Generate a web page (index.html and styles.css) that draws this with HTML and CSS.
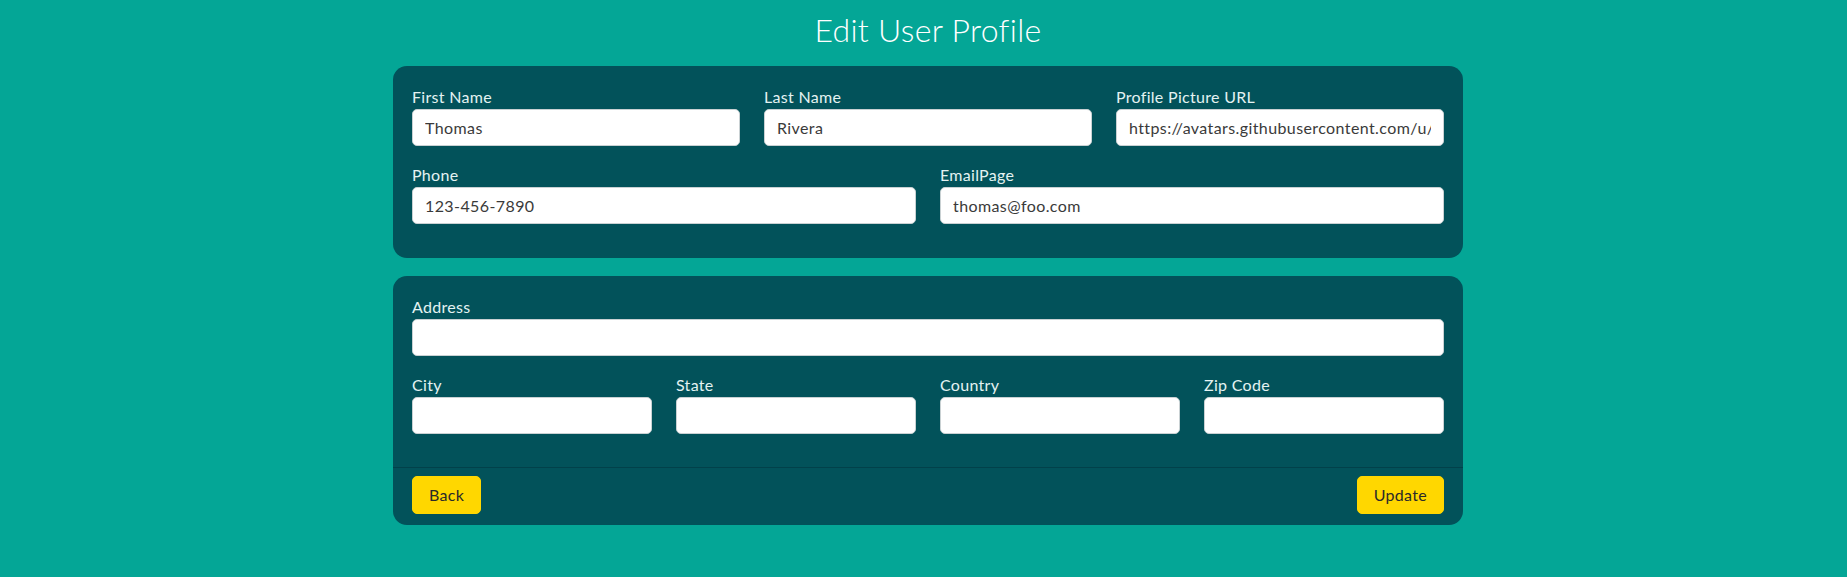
FILE: index.html
```html
<!DOCTYPE html>
<html lang="en">
<head>
<meta charset="utf-8">
<title>Edit User Profile</title>
<link rel="stylesheet" href="styles.css">
</head>
<body>
<main class="page">
  <h1 class="title">Edit User Profile</h1>
  <form class="form">
    <section class="card">
      <div class="card-body">
        <div class="row cols-3">
          <div class="field">
            <label class="label" for="first">First Name</label>
            <input class="input" id="first" type="text" value="Thomas">
          </div>
          <div class="field">
            <label class="label" for="last">Last Name</label>
            <input class="input" id="last" type="text" value="Rivera">
          </div>
          <div class="field">
            <label class="label" for="pic">Profile Picture URL</label>
            <input class="input" id="pic" type="text" value="https://avatars.githubusercontent.com/u/1234567?v=4">
          </div>
        </div>
        <div class="row cols-2">
          <div class="field">
            <label class="label" for="phone">Phone</label>
            <input class="input" id="phone" type="text" value="123-456-7890">
          </div>
          <div class="field">
            <label class="label" for="email">EmailPage</label>
            <input class="input" id="email" type="text" value="thomas@foo.com">
          </div>
        </div>
      </div>
    </section>
    <section class="card">
      <div class="card-body card-body-tight">
        <div class="row cols-1">
          <div class="field">
            <label class="label" for="address">Address</label>
            <input class="input" id="address" type="text" value="">
          </div>
        </div>
        <div class="row cols-4">
          <div class="field">
            <label class="label" for="city">City</label>
            <input class="input" id="city" type="text" value="">
          </div>
          <div class="field">
            <label class="label" for="state">State</label>
            <input class="input" id="state" type="text" value="">
          </div>
          <div class="field">
            <label class="label" for="country">Country</label>
            <input class="input" id="country" type="text" value="">
          </div>
          <div class="field">
            <label class="label" for="zip">Zip Code</label>
            <input class="input" id="zip" type="text" value="">
          </div>
        </div>
      </div>
      <div class="card-footer">
        <button class="btn" type="button">Back</button>
        <button class="btn" type="submit">Update</button>
      </div>
    </section>
  </form>
</main>
</body>
</html>
```

FILE: styles.css
```css
* {
  box-sizing: border-box;
}

html, body {
  margin: 0;
  padding: 0;
}

body {
  background: #04a696;
  font-family: Lato, "Open Sans", sans-serif;
  font-size: 16px;
  height: 577px;
  overflow: hidden;
}

.page {
  padding-left: 9px;
  display: flex;
  flex-direction: column;
  align-items: center;
}

.title {
  margin: 11px 0 17px;
  font-size: 32px;
  line-height: 1.2;
  font-weight: 300;
  letter-spacing: 0.3px;
  color: #ffffff;
}

.form {
  width: 1070px;
  display: flex;
  flex-direction: column;
  gap: 18px;
}

.card {
  background: #02525a;
  border-radius: 14px;
  overflow: hidden;
}

.card-body {
  padding: 19px 19px 17px;
}

.card-body-tight {
  padding-bottom: 16px;
}

.row {
  display: grid;
  column-gap: 24px;
}

.cols-1 { grid-template-columns: 1fr; }
.cols-2 { grid-template-columns: repeat(2, 1fr); }
.cols-3 { grid-template-columns: repeat(3, 1fr); }
.cols-4 { grid-template-columns: repeat(4, 1fr); }

.field {
  display: flex;
  flex-direction: column;
  margin-bottom: 17px;
  min-width: 0;
}

.label {
  display: block;
  color: #e4f2f2;
  font-size: 16px;
  line-height: 24px;
  letter-spacing: 0.3px;
}

.input {
  height: 37px;
  width: 100%;
  padding: 6px 12px;
  border: 1px solid #c9d1d3;
  border-radius: 5px;
  background: #ffffff;
  color: #3a3a3a;
  font-family: inherit;
  font-size: 16px;
  line-height: 24px;
  letter-spacing: 0.4px;
}

.card-footer {
  display: flex;
  justify-content: space-between;
  align-items: center;
  padding: 8px 19px 11px;
  border-top: 1px solid #01414a;
}

.btn {
  height: 38px;
  padding: 6px 16px;
  border: 1px solid #ffd700;
  border-radius: 5px;
  background: #ffd700;
  color: #2a2a2a;
  font-family: inherit;
  font-size: 16px;
  line-height: 24px;
  letter-spacing: 0.3px;
}
```
